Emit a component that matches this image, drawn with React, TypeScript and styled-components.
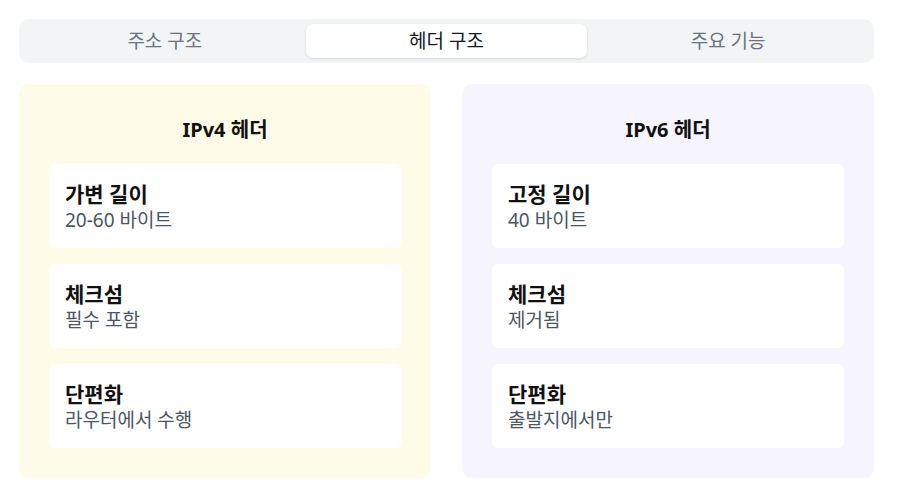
import React, { useState } from 'react';
import styled, { createGlobalStyle } from 'styled-components';

const GlobalStyle = createGlobalStyle`
  * { box-sizing: border-box; }
  body {
    margin: 0;
    background: #ffffff;
    font-family: "Noto Sans", "Noto Sans CJK KR", sans-serif;
  }
`;

const Page = styled.div`
  padding: 19px 23px 24px 19px;
`;

const TabBar = styled.div`
  display: grid;
  grid-template-columns: repeat(3, 1fr);
  height: 44px;
  padding: 5px;
  background: #f3f4f6;
  border-radius: 10px;
`;

const Tab = styled.button<{ $active: boolean }>`
  border: none;
  border-radius: 7px;
  font-family: inherit;
  font-size: 19px;
  line-height: 24px;
  cursor: pointer;
  background: ${(p) => (p.$active ? '#ffffff' : 'transparent')};
  color: ${(p) => (p.$active ? '#111827' : '#6b7280')};
  box-shadow: ${(p) => (p.$active ? '0 1px 3px rgba(0, 0, 0, 0.12)' : 'none')};
`;

const Columns = styled.div`
  display: grid;
  grid-template-columns: 1fr 1fr;
  gap: 31px;
  margin-top: 21px;
`;

const Panel = styled.div<{ $bg: string }>`
  background: ${(p) => p.$bg};
  border-radius: 10px;
  padding: 32px 30px 30px;
`;

const PanelTitle = styled.h3`
  margin: 0 0 20px;
  text-align: center;
  font-size: 20px;
  line-height: 28px;
  font-weight: 700;
  color: #111111;
`;

const CardList = styled.div`
  display: flex;
  flex-direction: column;
  gap: 16px;
`;

const Card = styled.div`
  background: #ffffff;
  border-radius: 6px;
  padding: 16px;
`;

const CardTitle = styled.div`
  font-size: 21px;
  line-height: 28px;
  font-weight: 700;
  color: #111111;
`;

const CardText = styled.div`
  font-size: 19px;
  line-height: 24px;
  color: #4b5563;
`;

type Item = { title: string; text: string };

const ipv4: Item[] = [
  { title: '가변 길이', text: '20-60 바이트' },
  { title: '체크섬', text: '필수 포함' },
  { title: '단편화', text: '라우터에서 수행' },
];

const ipv6: Item[] = [
  { title: '고정 길이', text: '40 바이트' },
  { title: '체크섬', text: '제거됨' },
  { title: '단편화', text: '출발지에서만' },
];

const tabs = ['주소 구조', '헤더 구조', '주요 기능'];

const App = () => {
  const [active, setActive] = useState(1);

  const renderPanel = (title: string, bg: string, items: Item[]) => (
    <Panel $bg={bg}>
      <PanelTitle>{title}</PanelTitle>
      <CardList>
        {items.map((item) => (
          <Card key={item.title}>
            <CardTitle>{item.title}</CardTitle>
            <CardText>{item.text}</CardText>
          </Card>
        ))}
      </CardList>
    </Panel>
  );

  return (
    <Page>
      <GlobalStyle />
      <TabBar>
        {tabs.map((t, i) => (
          <Tab key={t} $active={i === active} onClick={() => setActive(i)}>
            {t}
          </Tab>
        ))}
      </TabBar>
      <Columns>
        {renderPanel('IPv4 헤더', '#fefce8', ipv4)}
        {renderPanel('IPv6 헤더', '#f6f4fe', ipv6)}
      </Columns>
    </Page>
  );
};

export default App;
